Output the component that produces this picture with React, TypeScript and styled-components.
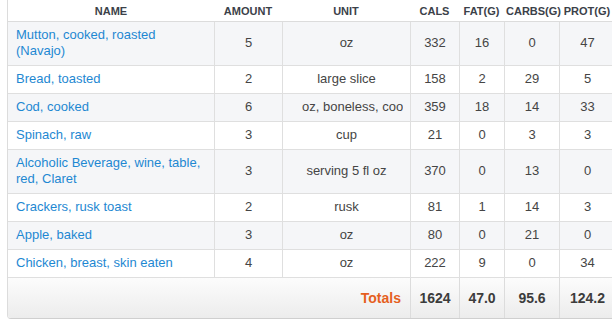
import styled, { createGlobalStyle } from "styled-components";

type Food = {
  name: string;
  amount: number;
  unit: string;
  cals: number;
  fat: number;
  carbs: number;
  prot: number;
  longUnit?: boolean;
};

const foods: Food[] = [
  { name: "Mutton, cooked, roasted (Navajo)", amount: 5, unit: "oz", cals: 332, fat: 16, carbs: 0, prot: 47 },
  { name: "Bread, toasted", amount: 2, unit: "large slice", cals: 158, fat: 2, carbs: 29, prot: 5 },
  { name: "Cod, cooked", amount: 6, unit: "oz, boneless, cooked", cals: 359, fat: 18, carbs: 14, prot: 33, longUnit: true },
  { name: "Spinach, raw", amount: 3, unit: "cup", cals: 21, fat: 0, carbs: 3, prot: 3 },
  { name: "Alcoholic Beverage, wine, table, red, Claret", amount: 3, unit: "serving 5 fl oz", cals: 370, fat: 0, carbs: 13, prot: 0 },
  { name: "Crackers, rusk toast", amount: 2, unit: "rusk", cals: 81, fat: 1, carbs: 14, prot: 3 },
  { name: "Apple, baked", amount: 3, unit: "oz", cals: 80, fat: 0, carbs: 21, prot: 0 },
  { name: "Chicken, breast, skin eaten", amount: 4, unit: "oz", cals: 222, fat: 9, carbs: 0, prot: 34 },
];

const GlobalStyle = createGlobalStyle`
  html, body {
    margin: 0;
    padding: 0;
    background: #fff;
    overflow: hidden;
  }
  body {
    font-family: "Liberation Sans", Arial, sans-serif;
  }
`;

function App() {
  return (
    <>
      <GlobalStyle />
      <Wrap>
        <Table>
          <colgroup>
            <col style={{ width: 206 }} />
            <col style={{ width: 68 }} />
            <col style={{ width: 128 }} />
            <col style={{ width: 49 }} />
            <col style={{ width: 45 }} />
            <col style={{ width: 55 }} />
            <col style={{ width: 56 }} />
          </colgroup>
          <thead>
            <tr>
              <Th>Name</Th>
              <Th>Amount</Th>
              <Th>Unit</Th>
              <Th>Cals</Th>
              <Th>Fat(g)</Th>
              <Th>Carbs(g)</Th>
              <Th>Prot(g)</Th>
            </tr>
          </thead>
          <tbody>
            {foods.map((f) => (
              <Row key={f.name}>
                <NameCell>
                  <a href="#">{f.name}</a>
                </NameCell>
                <Td>{f.amount}</Td>
                <Td>
                  <Unit $long={f.longUnit}>{f.unit}</Unit>
                </Td>
                <Td>{f.cals}</Td>
                <Td>{f.fat}</Td>
                <Td>{f.carbs}</Td>
                <Td>{f.prot}</Td>
              </Row>
            ))}
          </tbody>
          <tfoot>
            <tr>
              <TotalLabel colSpan={3}>Totals</TotalLabel>
              <TotalCell>1624</TotalCell>
              <TotalCell>47.0</TotalCell>
              <TotalCell>95.6</TotalCell>
              <TotalCell>124.2</TotalCell>
            </tr>
          </tfoot>
        </Table>
      </Wrap>
    </>
  );
}

const Wrap = styled.div`
  padding-left: 7px;
  width: 620px;
`;

const Table = styled.table`
  table-layout: fixed;
  width: 607px;
  border-collapse: separate;
  border-spacing: 0;
  border-left: 1px solid #dcdcdc;
  border-bottom: 1px solid #cfcfcf;
  border-bottom-left-radius: 4px;
  overflow: hidden;
  font-size: 13px;
  color: #454545;
`;

const Th = styled.th`
  height: 21px;
  padding: 0 2px;
  font-size: 11px;
  font-weight: bold;
  text-transform: uppercase;
  color: #3b4149;
  text-align: center;
  border-bottom: 1px solid #dcdcdc;
  background: #fff;
`;

const Row = styled.tr`
  &:nth-child(odd) td {
    background: #f5f6f8;
  }
  &:nth-child(even) td {
    background: #fff;
  }
`;

const Td = styled.td`
  padding: 5px 6px 6px;
  line-height: 16px;
  text-align: center;
  vertical-align: middle;
  border-bottom: 1px solid #dfdfdf;
  border-left: 1px solid #dfdfdf;
`;

const NameCell = styled(Td)`
  text-align: left;
  border-left: none;
  padding-left: 8px;
  a {
    color: #1e88d2;
    text-decoration: none;
  }
`;

const Unit = styled.div<{ $long?: boolean }>`
  white-space: nowrap;
  overflow: hidden;
  padding-left: ${(p) => (p.$long ? "13px" : "0")};
  margin-right: ${(p) => (p.$long ? "1px" : "0")};
`;

const TotalLabel = styled.td`
  height: 40px;
  padding: 0 9px;
  text-align: right;
  font-size: 14px;
  font-weight: bold;
  color: #e55f1e;
  background: linear-gradient(#fcfcfc, #ececec);
`;

const TotalCell = styled.td`
  height: 40px;
  padding: 0 4px;
  text-align: center;
  font-size: 14px;
  font-weight: bold;
  color: #3c3c3c;
  border-left: 1px solid #dcdcdc;
  background: linear-gradient(#fcfcfc, #ececec);
`;

export default App;
